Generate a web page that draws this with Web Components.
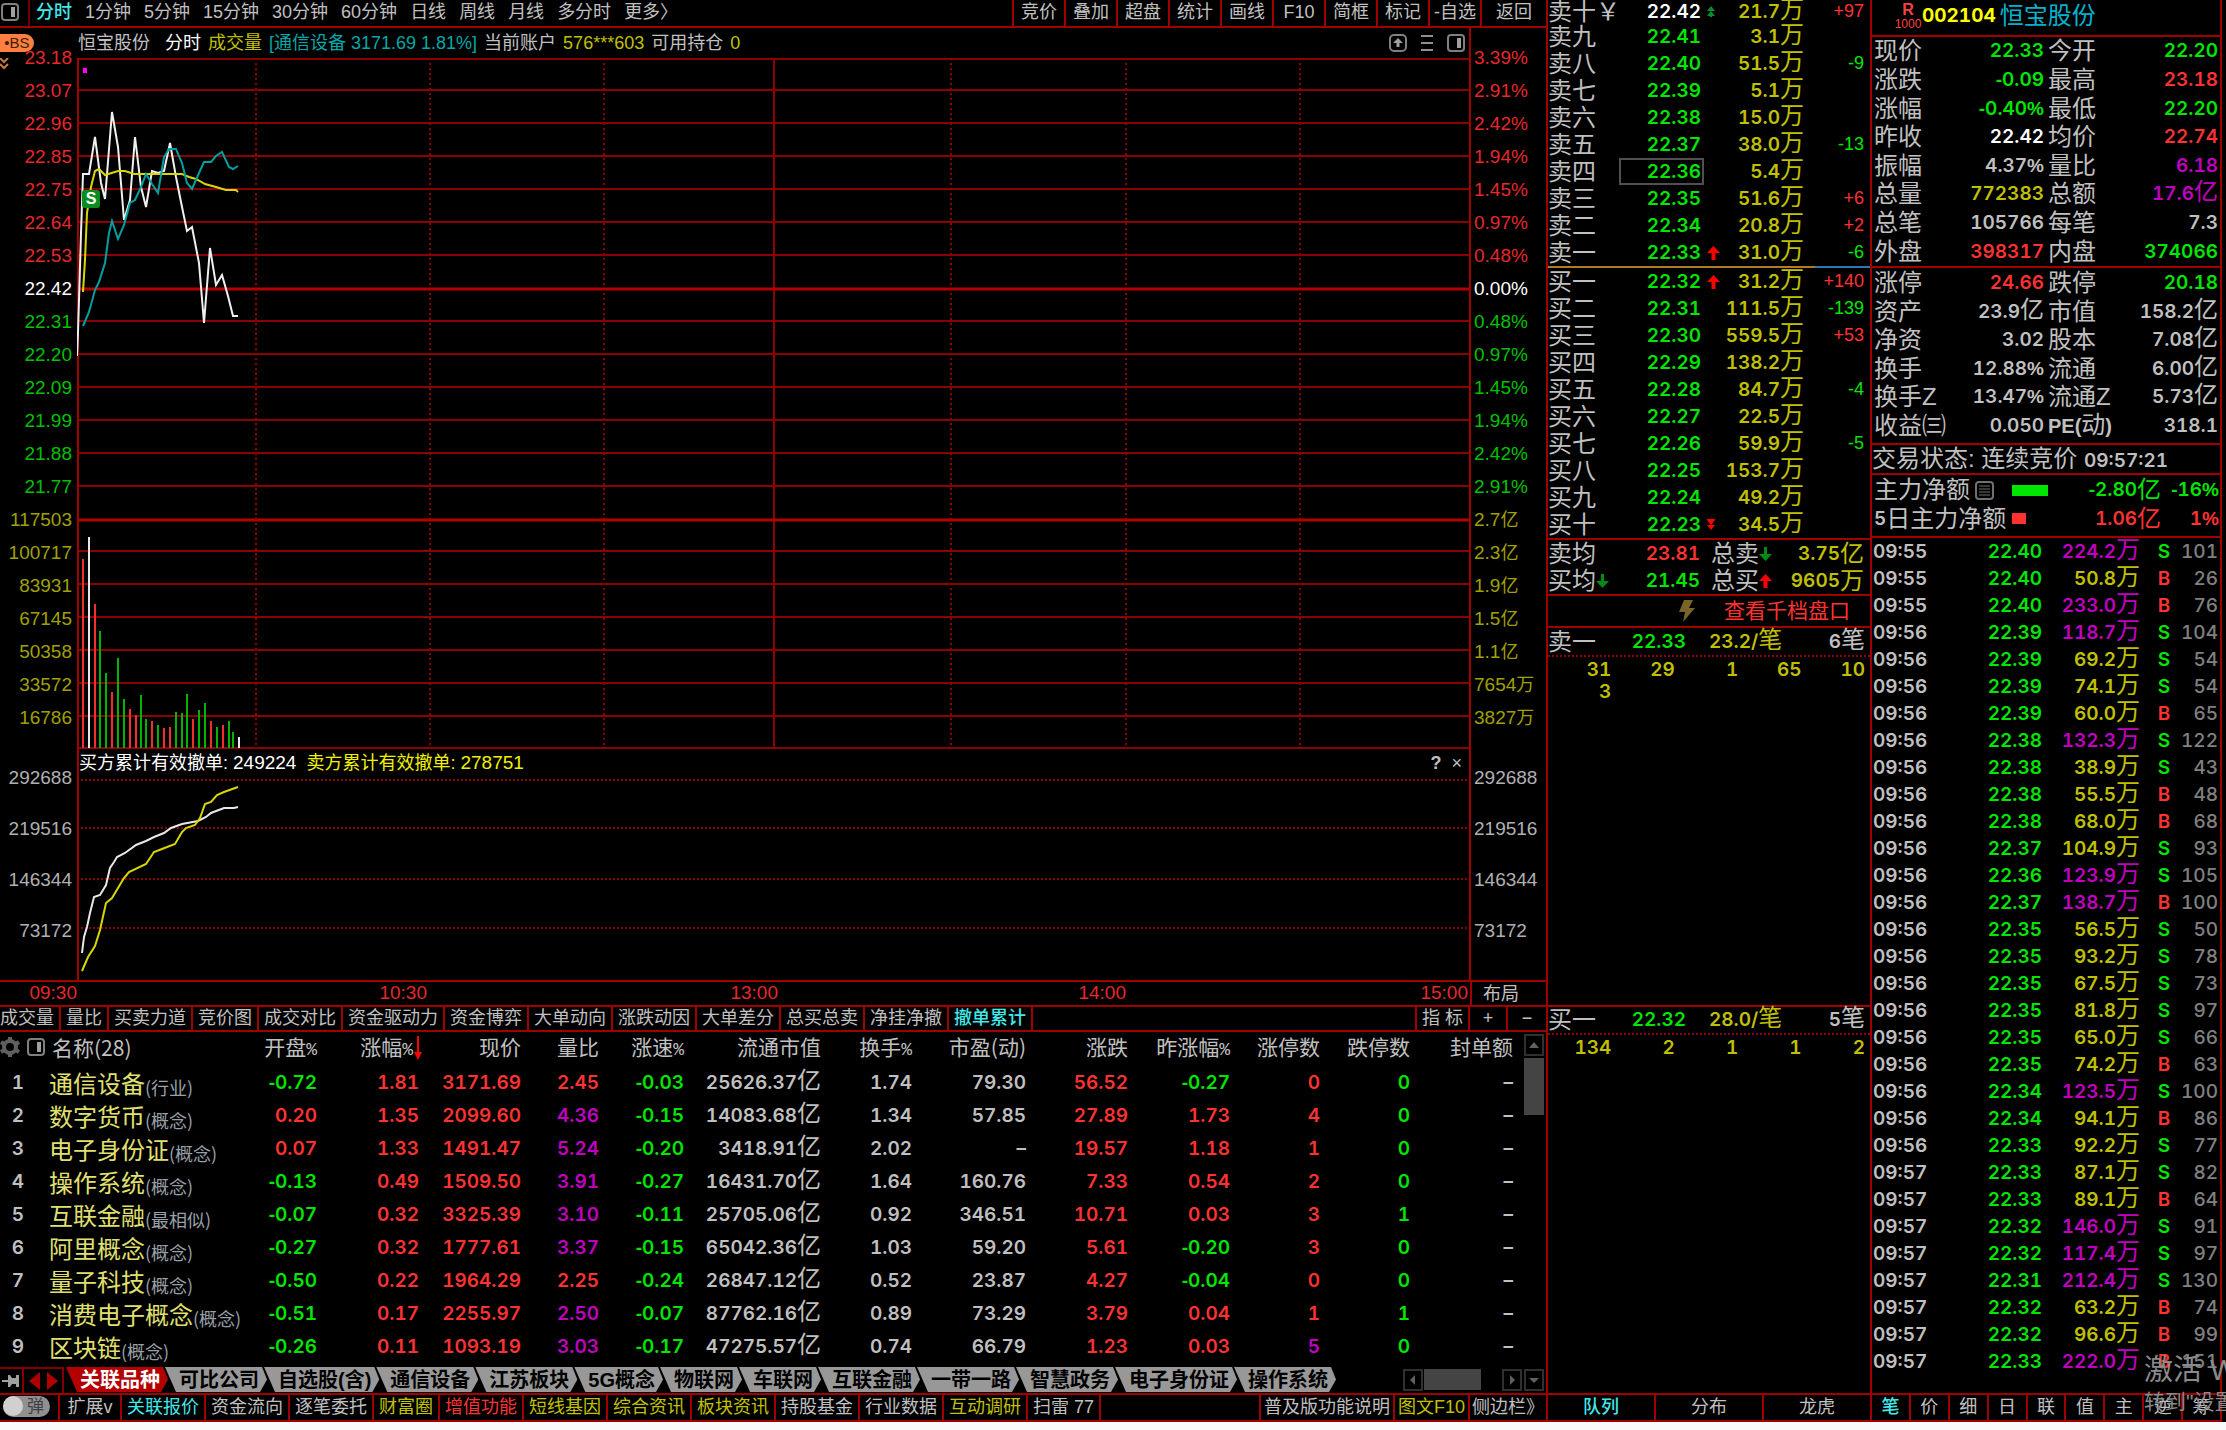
<!DOCTYPE html>
<html lang="zh-CN">
<head>
<meta charset="utf-8">
<meta name="viewport" content="width=device-width, initial-scale=1">
<title>恒宝股份 002104</title>
<style>
  html { background: #fafafa; }
  body {
    margin: 0; color: #c0c0c0; font: 400 18px/24px "Liberation Sans", "Noto Sans CJK SC", sans-serif;
    --line: #a00000; --red: #ff3232; --green: #00e600; --yellow: #c0c000; --mag: #c000c0;
    --cyan: #40e8e8; --gray: #808080;
  }
</style>
</head>
<body>
<trade-app></trade-app>
<script>
const BASE = `
  * { box-sizing: border-box; }
  :host { display: block; }
  button { font: inherit; color: inherit; background: none; border: 0; margin: 0; padding: 0; cursor: pointer; white-space: nowrap; }
  table { border-collapse: collapse; table-layout: fixed; width: 100%; }
  td, th { padding: 0; font-weight: inherit; text-align: right; white-space: nowrap; overflow: visible; }
  svg { display: block; flex: none; }
  .n { font-family: Inter, "Noto Sans CJK SC", sans-serif; font-weight: 600; font-size: 19px; font-variant-numeric: tabular-nums; white-space: nowrap; }
  .u { font-weight: 400; font-size: 24px; line-height: 0; }
  .s { font-family: "Liberation Sans", sans-serif; font-weight: 700; }
  .r { color: var(--red); } .g { color: var(--green); } .y { color: var(--yellow); }
  .m { color: var(--mag); } .w { color: #fff; } .c { color: var(--cyan); } .k { color: var(--gray); }
`;
/* wraps Chinese units so that they are set larger and lighter than the digits, and signs in a narrower face */
const num = t => String(t).replace(/[\u4e00-\u9fff]+|[-%]/g, m => `<span class="${/[-%]/.test(m) ? 's' : 'u'}">${m}</span>`);
function define(name, css, html, setup) {
  const tpl = document.createElement('template');
  tpl.innerHTML = `<style>${BASE}${css}</style>${html}`;
  customElements.define(name, class extends HTMLElement {
    constructor() {
      super();
      this.attachShadow({ mode: 'open' }).appendChild(tpl.content.cloneNode(true));
    }
    connectedCallback() { if (setup) setup(this, this.shadowRoot); }
  });
}
const ICON = {
  side: `<svg width="20" height="20" viewBox="0 0 20 20" fill="none" stroke="#808080" stroke-width="2"><rect x="2" y="2" width="16" height="16" rx="3"/><rect x="11" y="5" width="4" height="10" fill="#a0a0a0" stroke="none"/></svg>`,
  up: `<svg width="20" height="20" viewBox="0 0 20 20" fill="none" stroke="#808080" stroke-width="2"><rect x="2" y="2" width="16" height="16" rx="4"/><path d="M10 5l5 5h-3.500v4h-3v-4H5z" fill="#a0a0a0" stroke="none"/></svg>`,
  list: `<svg width="14" height="20" viewBox="0 0 14 20" stroke="#909090" stroke-width="2"><path d="M1 3h12M1 10h12M1 17h12"/></svg>`,
  arrowUp: `<svg width="13" height="14" viewBox="0 0 13 14" fill="#f00"><path d="M6.500 0L13 7H8.500v7h-4V7H0z"/></svg>`,
  arrowDown: `<svg width="13" height="14" viewBox="0 0 13 14" fill="#008c14"><path d="M6.500 14L13 7H8V0H5v7H0z"/></svg>`,
  dblUp: `<svg width="8" height="11" viewBox="0 0 8 11" fill="#009030"><path d="M4 0l4 5H0zM4 5l4 5H5v1H3v-1H0z"/></svg>`,
  dblDown: `<svg width="8" height="11" viewBox="0 0 8 11" fill="#f00"><path d="M4 11L0 6h8zM4 6L0 1V0h8v1z"/></svg>`
};

define('top-toolbar', `
  :host { display: flex; height: 28px; border-bottom: 2px solid var(--line); justify-content: space-between; }
  .l { display: flex; align-items: stretch; gap: 13px; }
  .ico { width: 30px; border-right: 2px solid #700000; margin-right: -7px; display: flex; align-items: center; }
  .r0 { display: flex; }
  .r0 button { width: 52px; border-left: 2px solid var(--line); padding-bottom: 2px; }
  .r0 button:last-child { width: 66px; }
  .l button { line-height: 22px; padding-bottom: 2px; }
  .act { color: var(--cyan); font-weight: 500; }
`, `<div class="l"></div><div class="r0"></div>`, (el, s) => {
  s.querySelector('.l').innerHTML = `<button class="ico" aria-label="侧栏">${ICON.side}</button>` +
    ['分时','1分钟','5分钟','15分钟','30分钟','60分钟','日线','周线','月线','多分时','更多〉']
      .map((t, i) => `<button class="${i ? '' : 'act'}">${t}</button>`).join('');
  s.querySelector('.r0').innerHTML = ['竞价','叠加','超盘','统计','画线','F10','简框','标记','-自选','返回'].map(t => `<button>${t}</button>`).join('');
});

define('chart-header', `
  :host { display: flex; height: 30px; }
  .t { flex: 1; display: flex; align-items: center; gap: 7px; border-right: 2px solid var(--line); padding-right: 3px; }
  .bs { background: #ff8040; color: #402000; width: 34px; height: 18px; border-radius: 0 9px 9px 0; font-size: 15px; line-height: 18px; margin-right: 37px; }
  .nm { margin-right: 8px; }
  .sp { flex: 1; } .ic { display: flex; gap: 12px; }
  .ax { width: 75px; } .sec { color: #00a8a8; }
`, `<div class="t"><button class="bs">•BS</button></div><div class="ax"></div>`, (el, s) => {
  s.querySelector('.t').insertAdjacentHTML('beforeend', `<span class="nm">恒宝股份</span><span class="w">分时</span><span class="y">成交量</span>
    <span class="sec">[通信设备 3171.69 1.81%]</span><span>当前账户</span><span class="y">576***603</span><span>可用持仓</span><span class="y">0</span>
    <span class="sp"></span><span class="ic"><button aria-label="上移">${ICON.up}</button><button aria-label="列表">${ICON.list}</button><button aria-label="面板">${ICON.side}</button></span>`);
});

const P = {
  price: '77,356 78,332 79,300 81,233 83,174 89,174 95,137 101,183 105,199 112,112 118,147 124,220 130,200 135,137 141,187 146,207 152,171 158,173 164,171 170,143 176,177 182,207 187,231 192,227 199,263 204,323 210,248 216,285 222,275 228,296 233,316 238,316',
  avg: '83,292 85,260 87,213 91,187 95,171 99,169 105,175 118,171 125,171 134,174 182,174 189,177 196,179 205,184 216,187 226,190 236,190 238,192',
  sector: '83,326 89,312 95,290 99,282 105,263 109,233 112,221 118,239 124,225 130,203 135,200 141,187 146,174 152,184 158,193 164,157 169,149 176,149 182,163 187,183 192,189 199,173 204,162 211,162 216,156 222,152 229,167 233,169 238,166',
  buy: '82,953 84,937 87,927 90,913 94,897 100,895 106,885 110,868 114,862 117,857 125,853 136,845 146,841 154,837 164,833 171,828 182,824 198,821 206,817 211,813 224,808 234,808 238,807',
  sell: '82,971 88,957 95,946 100,930 106,903 112,898 118,888 124,878 129,872 146,864 154,852 162,849 175,844 182,832 186,828 195,825 200,818 205,804 211,802 217,795 224,792 238,787'
};
const BARS = '83,559,r 89,537,w 95,604,r 100,631,g 106,673,g 112,692,r 118,658,g 124,699,g 130,709,r 136,715,r 141,695,g 146,719,g 152,721,r 158,725,g 164,728,r 170,727,r 176,712,g 182,713,g 187,694,g 193,719,r 199,710,g 205,703,g 211,721,r 217,727,g 223,725,r 229,721,g 233,732,g 239,737,w';
const COL = { r: '#f03030', w: '#e8e8e8', g: '#00b400' };

define('intraday-chart', `
  :host { display: grid; grid-template-columns: 77px minmax(0, 1fr) 75px; }
  .lab { display: flex; flex-direction: column; font-size: 19px; margin-top: -17px; }
  .lab span { height: 33px; line-height: 33px; }
  .lab.low span { height: 51px; line-height: 51px; }
  .lab .u { font-size: 18px; line-height: inherit; } .lab .s { font: inherit; }
  .lab.low { margin-top: 18px; color: #b0b0b0; }
  .left { position: relative; text-align: right; padding-right: 5px; } .right { text-align: left; padding-left: 3px; }
  .chev { position: absolute; left: 0; top: 0; width: 9px; }
  .lr { color: #e62828; } .lw { color: #fff; } .lg { color: #00c000; } .ly { color: #a0a000; }
  .plot { position: relative; } #p svg, #q svg { width: 100%; }
  .mark { position: absolute; left: 5px; top: 132px; width: 18px; height: 18px; border-radius: 3px; background: #0a8c1e; color: #fff; font-weight: 700; font-size: 16px; line-height: 18px; text-align: center; }
  .fh { display: flex; align-items: center; gap: 10px; height: 26px; border: solid var(--line); border-width: 0 2px; padding: 1px 7px 0 0; }
  .fh i { flex: 1; } .fh b { font-weight: 400; font-size: 19px; }
  .q { font-weight: 700; } .yy { color: #f0f000; }
  polyline, line { fill: none; vector-effect: non-scaling-stroke; }
`, `<div class="left"><svg class="chev" width="9" height="12" viewBox="0 0 9 12" fill="none" stroke="#c87840" stroke-width="2"><path d="M0 0l4 4 4-4M0 6l4 4 4-4"/></svg><div class="lab" id="a"></div><div class="lab low" id="b"></div></div>
<div class="plot"><div id="p"></div><span class="mark">S</span>
<div class="fh"><span class="w">买方累计有效撤单: <b>249224</b></span><span class="yy">卖方累计有效撤单: <b>278751</b></span><i></i><button class="q">?</button><button aria-label="关闭">×</button></div>
<div id="q"></div></div>
<div class="right"><div class="lab" id="c"></div><div class="lab low" id="d"></div></div>`, (el, s) => {
  const $ = i => s.getElementById(i);
  const cls = i => i < 7 ? 'lr' : i === 7 ? 'lw' : i < 14 ? 'lg' : 'ly';
  const put = (id, list, tint) => $(id).innerHTML = list.map((t, i) => `<span class="${tint ? cls(i) : ''}">${t.replace(/[\u4e00-\u9fff]/, m => `<span class="u">${m}</span>`)}</span>`).join('');
  put('a', ['23.18','23.07','22.96','22.85','22.75','22.64','22.53','22.42','22.31','22.20','22.09','21.99','21.88','21.77','117503','100717','83931','67145','50358','33572','16786'], true);
  put('c', ['3.39%','2.91%','2.42%','1.94%','1.45%','0.97%','0.48%','0.00%','0.48%','0.97%','1.45%','1.94%','2.42%','2.91%','2.7亿','2.3亿','1.9亿','1.5亿','1.1亿','7654万','3827万'], true);
  put('b', ['292688','219516','146344','73172']); put('d', ['292688','219516','146344','73172']);
  const H = (y, w = 2, c = '#8c0000', d = '') => `<line x1="77" x2="1471" y1="${y}" y2="${y}" stroke="${c}" stroke-width="${w}" ${d}/>`;
  const V = (x, c, d = '') => `<line x1="${x}" x2="${x}" y1="58" y2="980" stroke="${c}" stroke-width="2" ${d}/>`;
  const L = (k, c) => `<polyline points="${P[k]}" stroke="${c}" stroke-width="2"/>`;
  const dots = 'stroke-dasharray="2 3"';
  const frame = V(78, '#a00000') + V(1470, '#a00000');
  $('p').innerHTML = `<svg height="691" viewBox="77 58 1394 691" preserveAspectRatio="none">` +
    [256, 430, 604, 951, 1126, 1300].map(x => V(x, '#8c0000', dots)).join('') + V(774, '#8c0000') +
    [59, 90, 123, 156, 189, 222, 255, 321, 354, 387, 420, 453, 486, 551, 584, 617, 650, 683, 716, 748].map(y => H(y)).join('') +
    H(289, 3, '#b40000') + H(520, 3, '#b40000') + frame +
    BARS.split(' ').map(b => { const [x, y, c] = b.split(','); return `<line x1="${x}" x2="${x}" y1="${y}" y2="748" stroke="${COL[c]}" stroke-width="2"/>`; }).join('') +
    `<rect x="83" y="68" width="4" height="5" fill="#f0f"/>` + L('price', '#f0f0f0') + L('avg', '#d8d800') + L('sector', '#00a0a0') + `</svg>`;
  $('q').innerHTML = `<svg height="205" viewBox="77 775 1394 205" preserveAspectRatio="none">` +
    [780, 828, 879, 928].map(y => H(y, 2, '#8c0000', 'stroke-dasharray="2 2"')).join('') + frame + L('buy', '#e8e8e8') + L('sell', '#d8d800') + `</svg>`;
});

define('time-axis', `
  :host { display: grid; grid-template-columns: 77px 352fr 351fr 348fr 342fr 76px; height: 27px; border: solid var(--line); border-width: 2px 0; text-align: right; color: #e62828; }
  span { font-size: 19px; line-height: 22px; padding-right: 2px; }
  span:first-of-type { padding-right: 0; }
  button { border-left: 2px solid var(--line); color: #c0c0c0; padding-right: 16px; line-height: 22px; }
`, `<span>09:30</span><span>10:30</span><span>13:00</span><span>14:00</span><span>15:00</span><button>布局</button>`);

define('indicator-tabs', `
  :host { display: flex; height: 25px; border-bottom: 2px solid var(--line); }
  button { padding: 0 5px; border-right: 2px solid var(--line); line-height: 23px; }
  button:first-of-type { padding-left: 0; }
  .act { color: var(--cyan); font-weight: 500; } i { flex: 1; border-right: 2px solid var(--line); }
  .e { width: 38px; } .e:last-child { border: 0; }
`, ``, (el, s) => {
  s.innerHTML += ['成交量','量比','买卖力道','竞价图','成交对比','资金驱动力','资金博弈','大单动向','涨跌动因','大单差分','总买总卖','净挂净撤','撤单累计']
    .map((t, i) => `<button class="${i === 12 ? 'act' : ''}">${t}</button>`).join('') +
    `<i></i><button>指 标</button><button class="e">+</button><button class="e">−</button>`;
});

const ROWS = [
  ['通信设备','行业','-0.72','1.81','3171.69','2.45','-0.03','25626.37亿','1.74','79.30','56.52','-0.27','0','0'],
  ['数字货币','概念','0.20','1.35','2099.60','4.36','-0.15','14083.68亿','1.34','57.85','27.89','1.73','4','0'],
  ['电子身份证','概念','0.07','1.33','1491.47','5.24','-0.20','3418.91亿','2.02','–','19.57','1.18','1','0'],
  ['操作系统','概念','-0.13','0.49','1509.50','3.91','-0.27','16431.70亿','1.64','160.76','7.33','0.54','2','0'],
  ['互联金融','最相似','-0.07','0.32','3325.39','3.10','-0.11','25705.06亿','0.92','346.51','10.71','0.03','3','1'],
  ['阿里概念','概念','-0.27','0.32','1777.61','3.37','-0.15','65042.36亿','1.03','59.20','5.61','-0.20','3','0'],
  ['量子科技','概念','-0.50','0.22','1964.29','2.25','-0.24','26847.12亿','0.52','23.87','4.27','-0.04','0','0'],
  ['消费电子概念','概念','-0.51','0.17','2255.97','2.50','-0.07','87762.16亿','0.89','73.29','3.79','0.04','1','1'],
  ['区块链','概念','-0.26','0.11','1093.19','3.03','-0.17','47275.57亿','0.74','66.79','1.23','0.03','5','0']
];
define('sector-table', `
  :host { display: flex; height: 335px; }
  .tb { flex: 1; min-width: 0; }
  td { line-height: 33px; height: 33px; }
  th { font: 400 21px/28px "Noto Sans CJK SC", sans-serif; vertical-align: top; height: 34px; }
  th em { font: 18px "Liberation Mono", monospace; }
  th:first-child { text-align: left; } .hd { display: flex; align-items: center; gap: 6px; height: 29px; }
  .hd i { margin-left: 80px; width: 6px; height: 6px; border-radius: 3px; background: #c0c0c0; }
  .sort { display: inline; margin-right: -3px; vertical-align: -5px; }
  td:first-child { text-align: center; } td:nth-child(2) { text-align: left; padding-left: 13px; font: 400 24px/32px "Noto Sans CJK SC", sans-serif; color: #e0e070; }
  td small { font-size: 18px; line-height: 0; color: #98a0a8; vertical-align: -2px; }
  .sb { width: 22px; display: flex; flex-direction: column; gap: 2px; padding-top: 2px; }
  .sb button { width: 20px; height: 22px; border: 2px solid #303030; color: #606060; display: grid; place-items: center; }
  .sb i { width: 20px; height: 57px; background: #444; }
`, `<div class="tb"></div><div class="sb"><button aria-label="向上"><svg width="10" height="6"><path d="M5 0l5 6H0z" fill="#606060"/></svg></button><i></i></div>`, (el, s) => {
  const W = [36, 180, 101, 102, 102, 78, 85, 137, 91, 114, 102, 102, 90, 90, 103];
  const H = ['开盘%','涨幅%','现价','量比','涨速%','流通市值','换手%','市盈(动)','涨跌','昨涨幅%','涨停数','跌停数','封单额'];
  const gear = `<svg width="20" height="20" viewBox="-10 -10 20 20" fill="none" stroke="#606060"><circle r="6" stroke-width="4"/><path d="M0-10v3M0 10v-3M-9-5l3 2M9 5l-3-2M-9 5l3-2M9-5l-3 2" stroke-width="4"/></svg>`;
  const sign = v => v[0] === '-' ? 'g' : 'r';
  s.querySelector('.tb').innerHTML = `<table><colgroup>${W.map(w => `<col style="width:${w}px">`).join('')}<col></colgroup><thead><tr>
    <th colspan="2"><span class="hd">${gear}${ICON.side}名称(28)<i></i></span></th>${H.map((h, i) => `<th scope="col">${h.replace('%', '<em>%</em>')}${i === 1 ? '<svg class="sort" width="9" height="24" viewBox="0 0 9 24"><path d="M4 0h2v16h3l-4 8-4-8h3z" fill="#f00"/></svg>' : ''}</th>`).join('')}<th></th></tr></thead><tbody>` +
    ROWS.map((r, i) => {
      const cs = [sign(r[2]), 'r', 'r', [0, 6].includes(i) ? 'r' : 'm', 'g', '', '', '', 'r', sign(r[11]), i === 8 ? 'm' : 'r', 'g'];
      return `<tr><td class="n">${i + 1}</td><td>${r[0]}<small>(${r[1]})</small></td>` +
        r.slice(2).map((v, j) => `<td class="n ${cs[j]}">${num(v)}</td>`).join('') + `<td class="n">–</td><td></td></tr>`;
    }).join('') + `</tbody></table>`;
});

define('sheet-tabs', `
  :host { display: flex; height: 28px; border-bottom: 2px solid var(--line); font-weight: 700; font-size: 20px; color: #000; }
  .pin, .nav { border: 2px solid #800000; border-bottom: 0; display: grid; place-items: center; height: 26px; }
  .pin { width: 24px; border-left: 0; } .nav { width: 40px; border-left: 0; grid-auto-flow: column; margin-right: 2px; }
  .tab { height: 25px; line-height: 24px; padding: 0 8px 0 14px; margin-right: -3px; background: #989898; clip-path: polygon(0 0, calc(100% - 5px) 0, 100% 50%, calc(100% - 7px) 100%, 11px 100%); }
  .tab.act { background: #b40000; color: #fff; }
  .sp { flex: 1; }
  .box { width: 20px; height: 22px; border: 2px solid #303030; display: grid; place-items: center; margin: 2px 1px 0; }
  .th { width: 57px; height: 21px; background: #444; margin: 2px 20px 0 0; } .box:last-child { margin: 2px 2px 0 1px; }
`, ``, (el, s) => {
  const tri = d => `<svg width="10" height="10"><path d="${d}" fill="#606060"/></svg>`;
  s.innerHTML += `<button class="pin" aria-label="固定"><svg width="18" height="14" viewBox="0 0 18 14"><path d="M0 6h6V1h2l2 3h4V1h3v12h-3v-3h-4l-2 3H6V8H0z" fill="#a0a0a0"/></svg></button>
    <span class="nav"><button aria-label="上一个"><svg width="12" height="18"><path d="M12 0v18L1 9z" fill="#b00000"/></svg></button><button aria-label="下一个"><svg width="12" height="18"><path d="M0 0v18l11-9z" fill="#b00000"/></svg></button></span>` +
    ['关联品种','可比公司','自选股(含)','通信设备','江苏板块','5G概念','物联网','车联网','互联金融','一带一路','智慧政务','电子身份证','操作系统']
      .map((t, i) => `<button class="tab${i ? '' : ' act'}">${t}</button>`).join('') +
    `<span class="sp"></span><button class="box" aria-label="左">${tri('M7 0v10L2 5z')}</button><span class="th"></span><button class="box" aria-label="右">${tri('M3 0v10l5-5z')}</button><button class="box" aria-label="下">${tri('M0 3h10L5 8z')}</button>`;
});

define('bottom-nav', `
  :host { display: flex; height: 27px; border-bottom: 2px solid var(--line); }
  button, label { padding: 0 5px; border-right: 2px solid var(--line); line-height: 25px; }
  button:first-of-type { min-width: 62px; }
  label { width: 60px; padding: 1px 3px; } button.t { padding: 0 3px; }
  label input { appearance: none; position: absolute; margin: 0; width: 20px; height: 20px; border-radius: 50%; background: #d0d0d0; }
  label span { display: block; width: 47px; height: 21px; border-radius: 11px; background: #909090; color: #404040; font-size: 17px; line-height: 21px; text-align: right; padding-right: 6px; }
  i { flex: 1; border-right: 2px solid var(--line); } button:last-child { border: 0; width: 76px; padding: 0; }
`, ``, (el, s) => {
  const items = [['扩展v'],['关联报价','c'],['资金流向'],['逐笔委托'],['财富圈','y'],['增值功能','r'],['短线基因','y'],['综合资讯','y'],['板块资讯','y'],['持股基金'],['行业数据'],['互动调研','y'],['扫雷 77']];
  s.innerHTML += `<label><input type="checkbox"><span>弹</span></label>` + items.map(([t, c]) => `<button class="${c || ''}">${t}</button>`).join('') +
    `<i></i><button class="t">普及版功能说明</button><button class="t y">图文F10</button><button>侧边栏》</button>`;
});

const SELL = [['十','22.42','21.7万','+97'],['九','22.41','3.1万',''],['八','22.40','51.5万','-9'],['七','22.39','5.1万',''],['六','22.38','15.0万',''],['五','22.37','38.0万','-13'],['四','22.36','5.4万',''],['三','22.35','51.6万','+6'],['二','22.34','20.8万','+2'],['一','22.33','31.0万','-6']];
const BUY = [['一','22.32','31.2万','+140'],['二','22.31','111.5万','-139'],['三','22.30','559.5万','+53'],['四','22.29','138.2万',''],['五','22.28','84.7万','-4'],['六','22.27','22.5万',''],['七','22.26','59.9万','-5'],['八','22.25','153.7万',''],['九','22.24','49.2万',''],['十','22.23','34.5万','']];
define('order-book', `
  tr, td, th { height: 27px; line-height: 27px; } .first tr:first-child, .first tr:first-child > * { height: 23px; line-height: 23px; }
  th { text-align: left; font-size: 24px; }
  td svg { margin-left: 3px; } td.p { padding-right: 3px; } td.sel { box-shadow: inset 0 0 0 2px #505050; }
  td.d { font-size: 18px; }
  .mid { height: 2px; background: linear-gradient(90deg, #b07c20 83%, #2878b8 83%); }
  .avg { border: solid var(--line); border-width: 2px 0; display: grid; grid-template-columns: 46px 106px 58px 106px; grid-auto-rows: 27px; align-items: center; }
  .avg > * { display: flex; align-items: center; } .avg .n { justify-content: flex-end; white-space: nowrap; } .avg .l { font-size: 24px; white-space: nowrap; }
  .avg .l2 { padding-left: 11px; }
  .more { display: flex; align-items: center; justify-content: flex-end; gap: 28px; width: 100%; height: 32px; padding-right: 20px; border-bottom: 2px solid var(--line); color: var(--red); font-size: 21px; }
`, ``, (el, s) => {
  const row = side => (r, i) => {
    const a = r[1] === '22.42' ? ICON.dblUp : r[1] === '22.33' || r[1] === '22.32' ? ICON.arrowUp : r[1] === '22.23' ? ICON.dblDown : '';
    return `<tr><th scope="row">${side}${r[0]}${r[1] === '22.42' ? '￥' : ''}</th><td class="n p ${r[1] === '22.42' ? 'w' : 'g'} ${r[1] === '22.36' ? 'sel' : ''}">${r[1]}</td><td>${a}</td><td class="n y">${num(r[2])}</td><td class="d ${r[3][0] === '-' ? 'g' : 'r'}">${r[3]}</td><td></td></tr>`;
  };
  const cg = `<colgroup>${[71, 85, 20, 80, 60].map(w => `<col style="width:${w}px">`).join('')}<col></colgroup>`;
  s.innerHTML += `<table class="first">${cg}<tbody>${SELL.map(row('卖')).join('')}</tbody></table><div class="mid"></div>
    <table>${cg}<tbody>${BUY.map(row('买')).join('')}</tbody></table>
    <div class="avg"><span class="l">卖均</span><span class="n r">23.81</span><span class="l l2">总卖${ICON.arrowDown}</span><span class="n y">${num('3.75亿')}</span>
    <span class="l">买均${ICON.arrowDown}</span><span class="n g">21.45</span><span class="l l2">总买${ICON.arrowUp}</span><span class="n y">${num('9605万')}</span></div>
    <button class="more"><svg width="18" height="22" viewBox="0 0 18 22"><path d="M6 0h9l-4 8h6L5 22l2-10H1z" fill="#786428"/></svg>查看千档盘口</button>`;
});

define('order-queue', `
  .h { display: flex; align-items: center; height: 28px; padding: 0 5px 0 0; border-bottom: 2px dotted #900000; font-size: 24px; }
  .h span:nth-child(2) { width: 90px; text-align: right; } .h span:nth-child(3) { flex: 1; padding-left: 23px; }
  .v { display: grid; grid-template-columns: repeat(5, 1fr); text-align: right; padding: 1px 5px 0 0; line-height: 22px; margin-top: 1px; }
`, `<div class="h"></div><div class="v n y"></div>`, (el, s) => {
  const [n, p, q, c] = el.getAttribute('head').split('|');
  s.querySelector('.h').innerHTML = `<span>${n}</span><span class="n g">${p}</span><span class="n y">${num(q)}</span><span class="n">${num(c)}</span>`;
  s.querySelector('.v').innerHTML = el.getAttribute('values').split(',').map(v => `<span>${v}</span>`).join('');
});

define('foot-tabs', `
  :host { display: flex; height: 29px; border: solid var(--line); border-width: 2px 0; }
  button { flex: 1; border-right: 2px solid var(--line); line-height: 25px; min-width: 0; } button:last-child { border: 0; }
  .act { color: var(--cyan); font-weight: 500; }
`, ``, (el, s) => { s.innerHTML += el.getAttribute('items').split(',').map((t, i) => `<button class="${i ? '' : 'act'}">${t}</button>`).join(''); });

const Q1 = ['现价|22.33|g|今开|22.20|g','涨跌|-0.09|g|最高|23.18|r','涨幅|-0.40%|g|最低|22.20|g','昨收|22.42|w|均价|22.74|r','振幅|4.37%||量比|6.18|m','总量|772383|y|总额|17.6亿|m','总笔|105766||每笔|7.3|','外盘|398317|r|内盘|374066|g'];
const Q2 = ['涨停|24.66|r|跌停|20.18|g','资产|23.9亿||市值|158.2亿|','净资|3.02||股本|7.08亿|','换手|12.88%||流通|6.00亿|','换手Z|13.47%||流通Z|5.73亿|','收益㈢|0.050||PE(动)|318.1|'];
define('quote-panel', `
  .ti { display: flex; align-items: center; height: 37px; border-bottom: 2px solid var(--line); padding: 0 0 3px 22px; }
  .rk { display: grid; text-align: center; color: #ff4040; font-size: 12px; line-height: 14px; width: 28px; } .rk b { font-size: 16px; line-height: 15px; }
  .ti .n { color: #ffff00; font-weight: 700; font-size: 19px; } .ti .nm { font-size: 24px; color: #00b4d0; padding-left: 4px; }
  .blk { display: grid; grid-template-columns: minmax(0, 1fr) minmax(0, 1fr); column-gap: 4px; padding: 0 2px; border-bottom: 2px solid var(--line); }
  .a { height: 231px; grid-auto-rows: 1fr; } .b { height: 177px; padding-block: 1px 3px; grid-auto-rows: 1fr; }
  .it { display: flex; justify-content: space-between; align-items: center; font-size: 24px; white-space: nowrap; }
  .pe { font-size: 20px; font-weight: 600; } .pe .u { font-size: 24px; }
  .st { height: 30px; border-bottom: 2px solid var(--line); font-size: 24px; line-height: 28px; white-space: nowrap; }
  .fl { display: grid; grid-template-columns: 138px 54px 1fr 58px; grid-auto-rows: 1fr; height: 63px; padding: 1px 1px 3px 2px; border-bottom: 2px solid var(--line); align-items: center; }
  .fl > * { display: flex; align-items: center; white-space: nowrap; } .fl > .n { justify-content: flex-end; } .fl .l { font-size: 24px; gap: 5px; }
  .bar { height: 11px; background: var(--green); width: 36px; } .bar.sm { width: 14px; background: var(--red); }
  .l .n { margin-right: -5px; }
`, ``, (el, s) => {
  const cells = q => q.map(l => { const p = l.split('|'); return [0, 3].map(k => `<div class="it"><span>${p[k] === 'PE(动)' ? '<span class="pe">PE(<span class="u">动</span>)</span>' : p[k]}</span><span class="n ${p[k + 2]}">${num(p[k + 1])}</span></div>`).join(''); }).join('');
  s.innerHTML += `<div class="ti"><span class="rk"><b>R</b>1000</span><span class="n">002104</span><span class="nm">恒宝股份</span></div>
    <div class="blk a">${cells(Q1)}</div><div class="blk b">${cells(Q2)}</div>
    <div class="st">交易状态: 连续竞价 <span class="n">09:57:21</span></div>
    <div class="fl"><span class="l">主力净额<svg width="19" height="19" viewBox="0 0 19 19" fill="none" stroke="#707070" stroke-width="2"><rect x="1" y="1" width="17" height="17" rx="3"/><path d="M4 5h11M4 8h11M4 11h11M4 14h11" stroke-width="1"/></svg></span><span><span class="bar"></span></span><span class="n g">${num('-2.80亿')}</span><span class="n g">${num('-16%')}</span>
    <span class="l"><span class="n">5</span>日主力净额</span><span><span class="bar sm"></span></span><span class="n r">${num('1.06亿')}</span><span class="n r">${num('1%')}</span></div>`;
});

const TICKS = `09:55 22.40 224.2 S 101,09:55 22.40 50.8 B 26,09:55 22.40 233.0 B 76,09:56 22.39 118.7 S 104,09:56 22.39 69.2 S 54,09:56 22.39 74.1 S 54,09:56 22.39 60.0 B 65,09:56 22.38 132.3 S 122,09:56 22.38 38.9 S 43,09:56 22.38 55.5 B 48,09:56 22.38 68.0 B 68,09:56 22.37 104.9 S 93,09:56 22.36 123.9 S 105,09:56 22.37 138.7 B 100,09:56 22.35 56.5 S 50,09:56 22.35 93.2 S 78,09:56 22.35 67.5 S 73,09:56 22.35 81.8 S 97,09:56 22.35 65.0 S 66,09:56 22.35 74.2 B 63,09:56 22.34 123.5 S 100,09:56 22.34 94.1 B 86,09:56 22.33 92.2 S 77,09:57 22.33 87.1 S 82,09:57 22.33 89.1 B 64,09:57 22.32 146.0 S 91,09:57 22.32 117.4 S 97,09:57 22.31 212.4 S 130,09:57 22.32 63.2 B 74,09:57 22.32 96.6 B 99,09:57 22.33 222.0 B 151`;
define('tick-list', `
  td { height: 27px; line-height: 27px; } td:first-child { text-align: left; padding-left: 1px; }
  td.bs { text-align: center; padding-left: 7px; } td:last-child { padding-right: 2px; font-weight: 500; }
`, ``, (el, s) => {
  s.innerHTML += `<table><colgroup><col><col style="width:80px"><col style="width:98px"><col style="width:41px"><col style="width:39px"></colgroup><tbody>` +
    TICKS.split(',').map(t => { const [a, p, v, b, c] = t.split(' '); return `<tr><td class="n">${a}</td><td class="n g">${p}</td><td class="n ${+v > 105 ? 'm' : 'y'}">${num(v + '万')}</td><td class="n bs ${b === 'B' ? 'r' : 'g'}">${b}</td><td class="n k">${c}</td></tr>`; }).join('') + `</tbody></table>`;
});

define('trade-app', `
  :host { display: grid; grid-template-columns: minmax(0, 1fr) 324px 356px; background: #000; position: relative; }
  .left, .mid, .right { display: flex; flex-direction: column; min-width: 0; }
  .mid { border-left: 2px solid var(--line); }
  .right { border: solid var(--line); border-width: 0 2px; margin-right: 4px; }
  .q1 { flex: 376 1 0; padding-top: 1px; } .q2 { flex: 387 1 0; border-top: 2px solid var(--line); } tick-list { flex: 1; }
  .wm { position: absolute; right: 0; bottom: 6px; width: 82px; overflow: hidden; color: #8a8a8a; font-size: 29px; line-height: 36px; white-space: nowrap; pointer-events: none; }
  .wm span { display: block; font-size: 21px; line-height: 28px; }
`, `<div class="left"><top-toolbar></top-toolbar><chart-header></chart-header><intraday-chart></intraday-chart><time-axis></time-axis><indicator-tabs></indicator-tabs><sector-table></sector-table><sheet-tabs></sheet-tabs><bottom-nav></bottom-nav></div>
<div class="mid"><order-book></order-book>
<order-queue class="q1" head="卖一|22.33|23.2/笔|6笔" values="31,29,1,65,10,3"></order-queue>
<order-queue class="q2" head="买一|22.32|28.0/笔|5笔" values="134,2,1,1,2"></order-queue>
<foot-tabs items="队列,分布,龙虎"></foot-tabs></div>
<div class="right"><quote-panel></quote-panel><tick-list></tick-list><foot-tabs items="笔,价,细,日,联,值,主,逆,筹"></foot-tabs></div>
<div class="wm">激活 W<span>转到"设置</span></div>`);
</script>
</body>
</html>
